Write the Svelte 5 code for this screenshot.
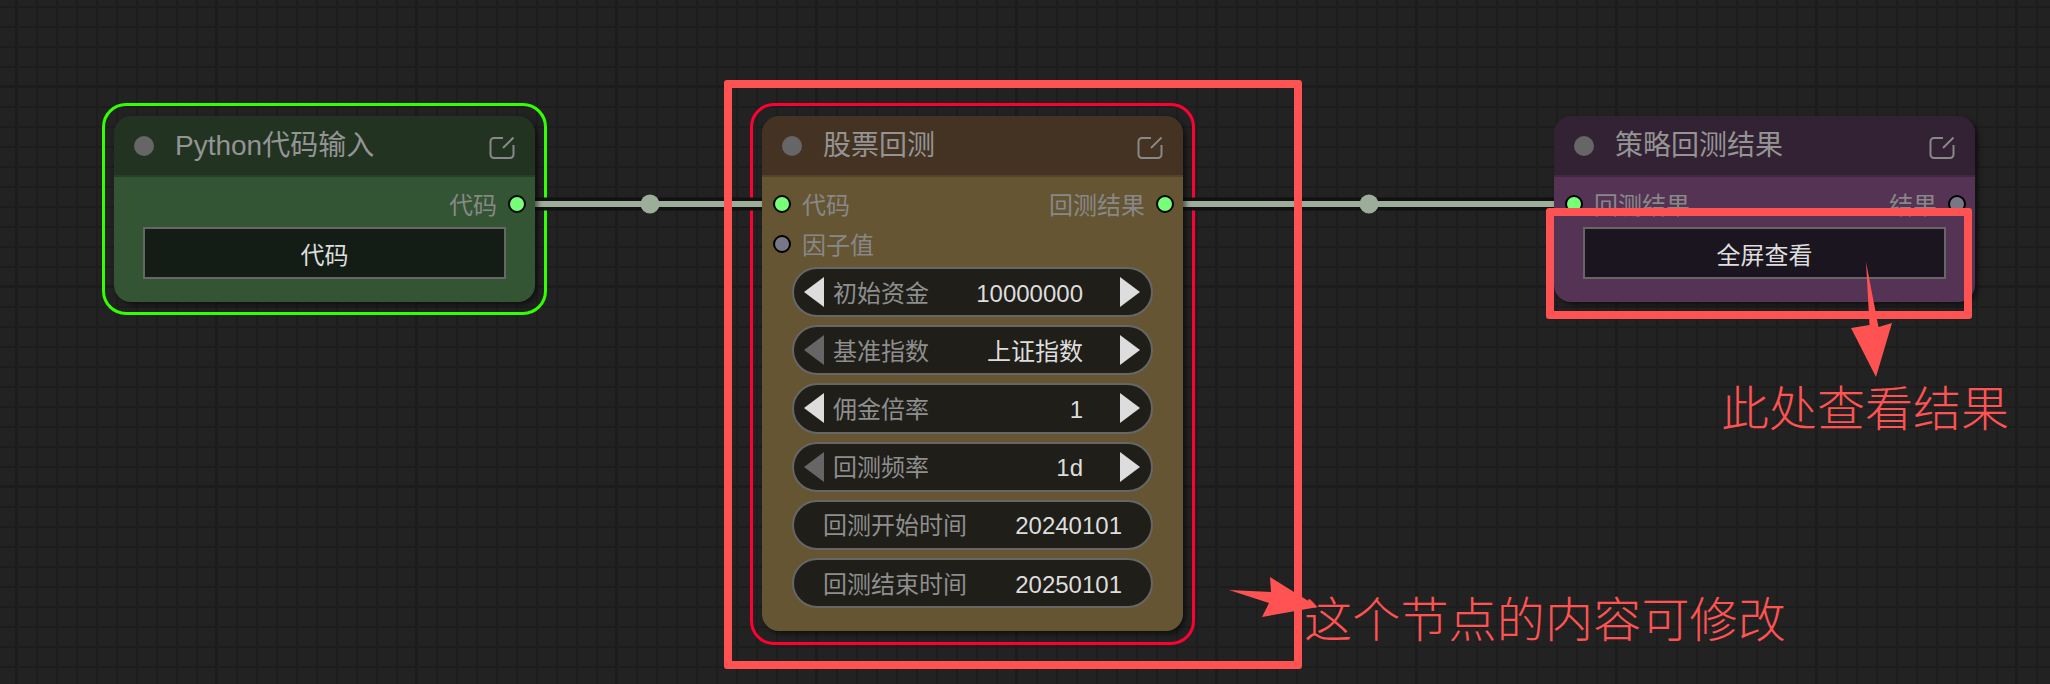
<script>
  const pyNode = { title: 'Python代码输入', inputs: [], outputs: [{ name: '代码', on: true }], button: '代码' }
  const btNode = {
    title: '股票回测',
    inputs: [{ name: '代码', on: true }, { name: '因子值', on: false }],
    outputs: [{ name: '回测结果', on: true }],
    widgets: [
      { label: '初始资金', value: '10000000', arrows: true, left: true },
      { label: '基准指数', value: '上证指数', arrows: true, left: false },
      { label: '佣金倍率', value: '1', arrows: true, left: true },
      { label: '回测频率', value: '1d', arrows: true, left: false },
      { label: '回测开始时间', value: '20240101' },
      { label: '回测结束时间', value: '20250101' }
    ]
  }
  const resNode = {
    title: '策略回测结果',
    inputs: [{ name: '回测结果', on: true }],
    outputs: [{ name: '结果', on: false }],
    button: '全屏查看'
  }
  const nodes = [
    { cls: 'py', ...pyNode },
    { cls: 'bt', ...btNode },
    { cls: 'res', ...resNode }
  ]
</script>

<div class="canvas">
  <div class="outline green"></div>
  <div class="outline red"></div>

  <svg class="links" width="2050" height="684">
    <path d="M530 204H770M1175 204H1560" class="link-bg" />
    <path d="M530 204H770M1175 204H1560" class="link-fg" />
    <circle cx="650" cy="204" r="9.5" />
    <circle cx="1369" cy="204" r="9.5" />
  </svg>

  {#each nodes as node}
    <div class="node {node.cls}">
      <div class="title">
        <span class="status"></span>
        <span class="title-text">{node.title}</span>
        <svg class="edit" width="26" height="24" viewBox="0 0 26 24">
          <path d="M14 2H5a3.500 3.500 0 0 0-3.500 3.500v13A3.500 3.500 0 0 0 5 22h16a3.500 3.500 0 0 0 3.500-3.500V9" />
          <path d="M24.500 1.500 14 12" />
        </svg>
      </div>
      <div class="body">
        <div class="slots">
          <div class="col">
            {#each node.inputs as s}
              <div class="slot">
                <i class="pin" class:on={s.on}></i>
                <span>{s.name}</span>
              </div>
            {/each}
          </div>
          <div class="col">
            {#each node.outputs as s}
              <div class="slot out">
                <span>{s.name}</span>
                <i class="pin" class:on={s.on}></i>
              </div>
            {/each}
          </div>
        </div>

        {#if node.button}
          <button class="btn">{node.button}</button>
        {/if}

        {#if node.widgets}
          <div class="widgets">
            {#each node.widgets as w}
              <div class="pill" class:plain={!w.arrows}>
                {#if w.arrows}
                  <svg class="arrow" class:off={!w.left} width="20" height="30" viewBox="0 0 20 30"><path d="M20 0V30L0 15Z" /></svg>
                {/if}
                <span class="label">{w.label}</span>
                <span class="value">{w.value}</span>
                {#if w.arrows}
                  <svg class="arrow right" width="20" height="30" viewBox="0 0 20 30"><path d="M0 0V30L20 15Z" /></svg>
                {/if}
              </div>
            {/each}
          </div>
        {/if}
      </div>
    </div>
  {/each}

  <div class="frame one"></div>
  <div class="frame two"></div>

  <svg class="marks" width="2050" height="684">
    <path d="M1866 262 1878.500 327 1892 323 1876 377 1851 328 1869.500 325Z" />
    <path d="M1229 590 1271 592 1270 577 1318 607 1262 617 1269 603Z" />
  </svg>

  <div class="note n1">这个节点的内容可修改</div>
  <div class="note n2">此处查看结果</div>
</div>

<style>
:global(body) {
  margin: 0;
  background: #222;
}

.canvas {
  position: relative;
  width: 2050px;
  height: 684px;
  overflow: hidden;
  font-family: "Liberation Sans", "Noto Sans CJK SC", sans-serif;
  background-color: #222;
  background-image:
    linear-gradient(90deg, #1c1c1c 3px, transparent 3px),
    linear-gradient(#1c1c1c 3px, transparent 3px),
    linear-gradient(90deg, #1d1d1d 2px, transparent 2px),
    linear-gradient(#1d1d1d 2px, transparent 2px);
  background-size: 200px 200px, 200px 200px, 20px 20px, 20px 20px;
  background-position: 15px 0, 0 85px, 16px 0, 0 6px;
}

.outline {
  position: absolute;
  box-sizing: border-box;
  border: 3px solid;
  border-radius: 24px;
}
.outline.green {
  left: 102px;
  top: 103px;
  width: 445px;
  height: 212px;
  border-color: #3f0;
}
.outline.red {
  left: 750px;
  top: 103px;
  width: 445px;
  height: 542px;
  border-color: #f03;
}

.links {
  position: absolute;
  left: 0;
  top: 0;
}
.link-bg {
  stroke: #111;
  stroke-width: 13;
  fill: none;
}
.link-fg {
  stroke: #9cad9a;
  stroke-width: 6;
  fill: none;
}
.links circle {
  fill: #9cad9a;
}

.node {
  position: absolute;
  top: 116px;
  width: 421px;
  border-radius: 17px;
  overflow: hidden;
  box-shadow: 3px 3px 5px rgba(0, 0, 0, 0.5);
  color: #999;
}
.node.py {
  left: 114px;
  --head: #223322;
  --line: #2a3f2a;
  --bg: #335533;
  --btn: #141d15;
}
.node.bt {
  left: 762px;
  --head: #443322;
  --line: #55442a;
  --bg: #665533;
}
.node.res {
  left: 1554px;
  --head: #332233;
  --line: #3f2a40;
  --bg: #553355;
  --btn: #1b1520;
}

.title {
  display: flex;
  align-items: center;
  box-sizing: border-box;
  height: 61px;
  padding: 0 20px 0 20px;
  background: var(--head);
  border-bottom: 2px solid var(--line);
}
.status {
  width: 20px;
  height: 20px;
  border-radius: 50%;
  background: #666;
}
.title-text {
  margin-left: 21px;
  flex: 1;
  font-size: 28px;
  line-height: 28px;
  padding-top: 1px;
  color: #949494;
}
.edit {
  margin-top: 4px;
  fill: none;
  stroke: #888;
  stroke-width: 2;
}

.body {
  padding: 7px 0 23px;
  background: var(--bg);
}

.slots {
  display: flex;
  justify-content: space-between;
  padding: 0 9px 0 11px;
}
.slot {
  display: flex;
  align-items: center;
  gap: 11px;
  height: 40px;
  font-size: 24px;
  line-height: 24px;
  color: #888;
}
.slot span {
  padding-top: 3px;
}
.slot.out {
  justify-content: flex-end;
}
.pin {
  box-sizing: border-box;
  width: 18px;
  height: 18px;
  border: 2px solid #000;
  border-radius: 50%;
  background: #778;
}
.pin.on {
  background: #7f7;
}

.btn {
  display: block;
  box-sizing: border-box;
  width: 363px;
  height: 52px;
  margin: 3px 0 0 29px;
  padding: 0;
  border: 2px solid #666;
  border-radius: 0;
  background: var(--btn);
  color: #ddd;
  font-family: inherit;
  font-size: 24px;
}

.widgets {
  display: flex;
  flex-direction: column;
  gap: 8px;
  width: 361px;
  margin: 3px 0 0 30px;
}
.pill {
  display: flex;
  align-items: center;
  box-sizing: border-box;
  height: 50.2px;
  padding: 0 11px 0 10px;
  border: 2px solid #666;
  border-radius: 26px;
  background: #1f1e19;
  font-size: 24px;
  line-height: 24px;
}
.pill.plain {
  padding: 0 29px 0 29px;
}
.label {
  flex: 1;
  margin-left: 9px;
  padding-top: 3px;
  color: #8e8e8e;
}
.plain .label {
  margin-left: 0;
}
.value {
  padding-top: 3px;
  color: #ddd;
}
.arrow {
  fill: #ddd;
  flex: none;
}
.arrow.off {
  fill: #666;
}
.arrow.right {
  margin-left: 37px;
}

.frame {
  position: absolute;
  box-sizing: border-box;
  border: 8px solid #ff5252;
  border-radius: 3px;
}
.frame.one {
  left: 724px;
  top: 80px;
  width: 578px;
  height: 589px;
}
.frame.two {
  left: 1546px;
  top: 208px;
  width: 426px;
  height: 111px;
}

.marks {
  position: absolute;
  left: 0;
  top: 0;
  fill: #ff5252;
}

.note {
  position: absolute;
  font-size: 48px;
  line-height: 60px;
  font-weight: 300;
  color: #ff5252;
  white-space: nowrap;
}
.note.n1 {
  left: 1304px;
  top: 591px;
  letter-spacing: 0.2px;
}
.note.n2 {
  left: 1721px;
  top: 380px;
}
</style>
